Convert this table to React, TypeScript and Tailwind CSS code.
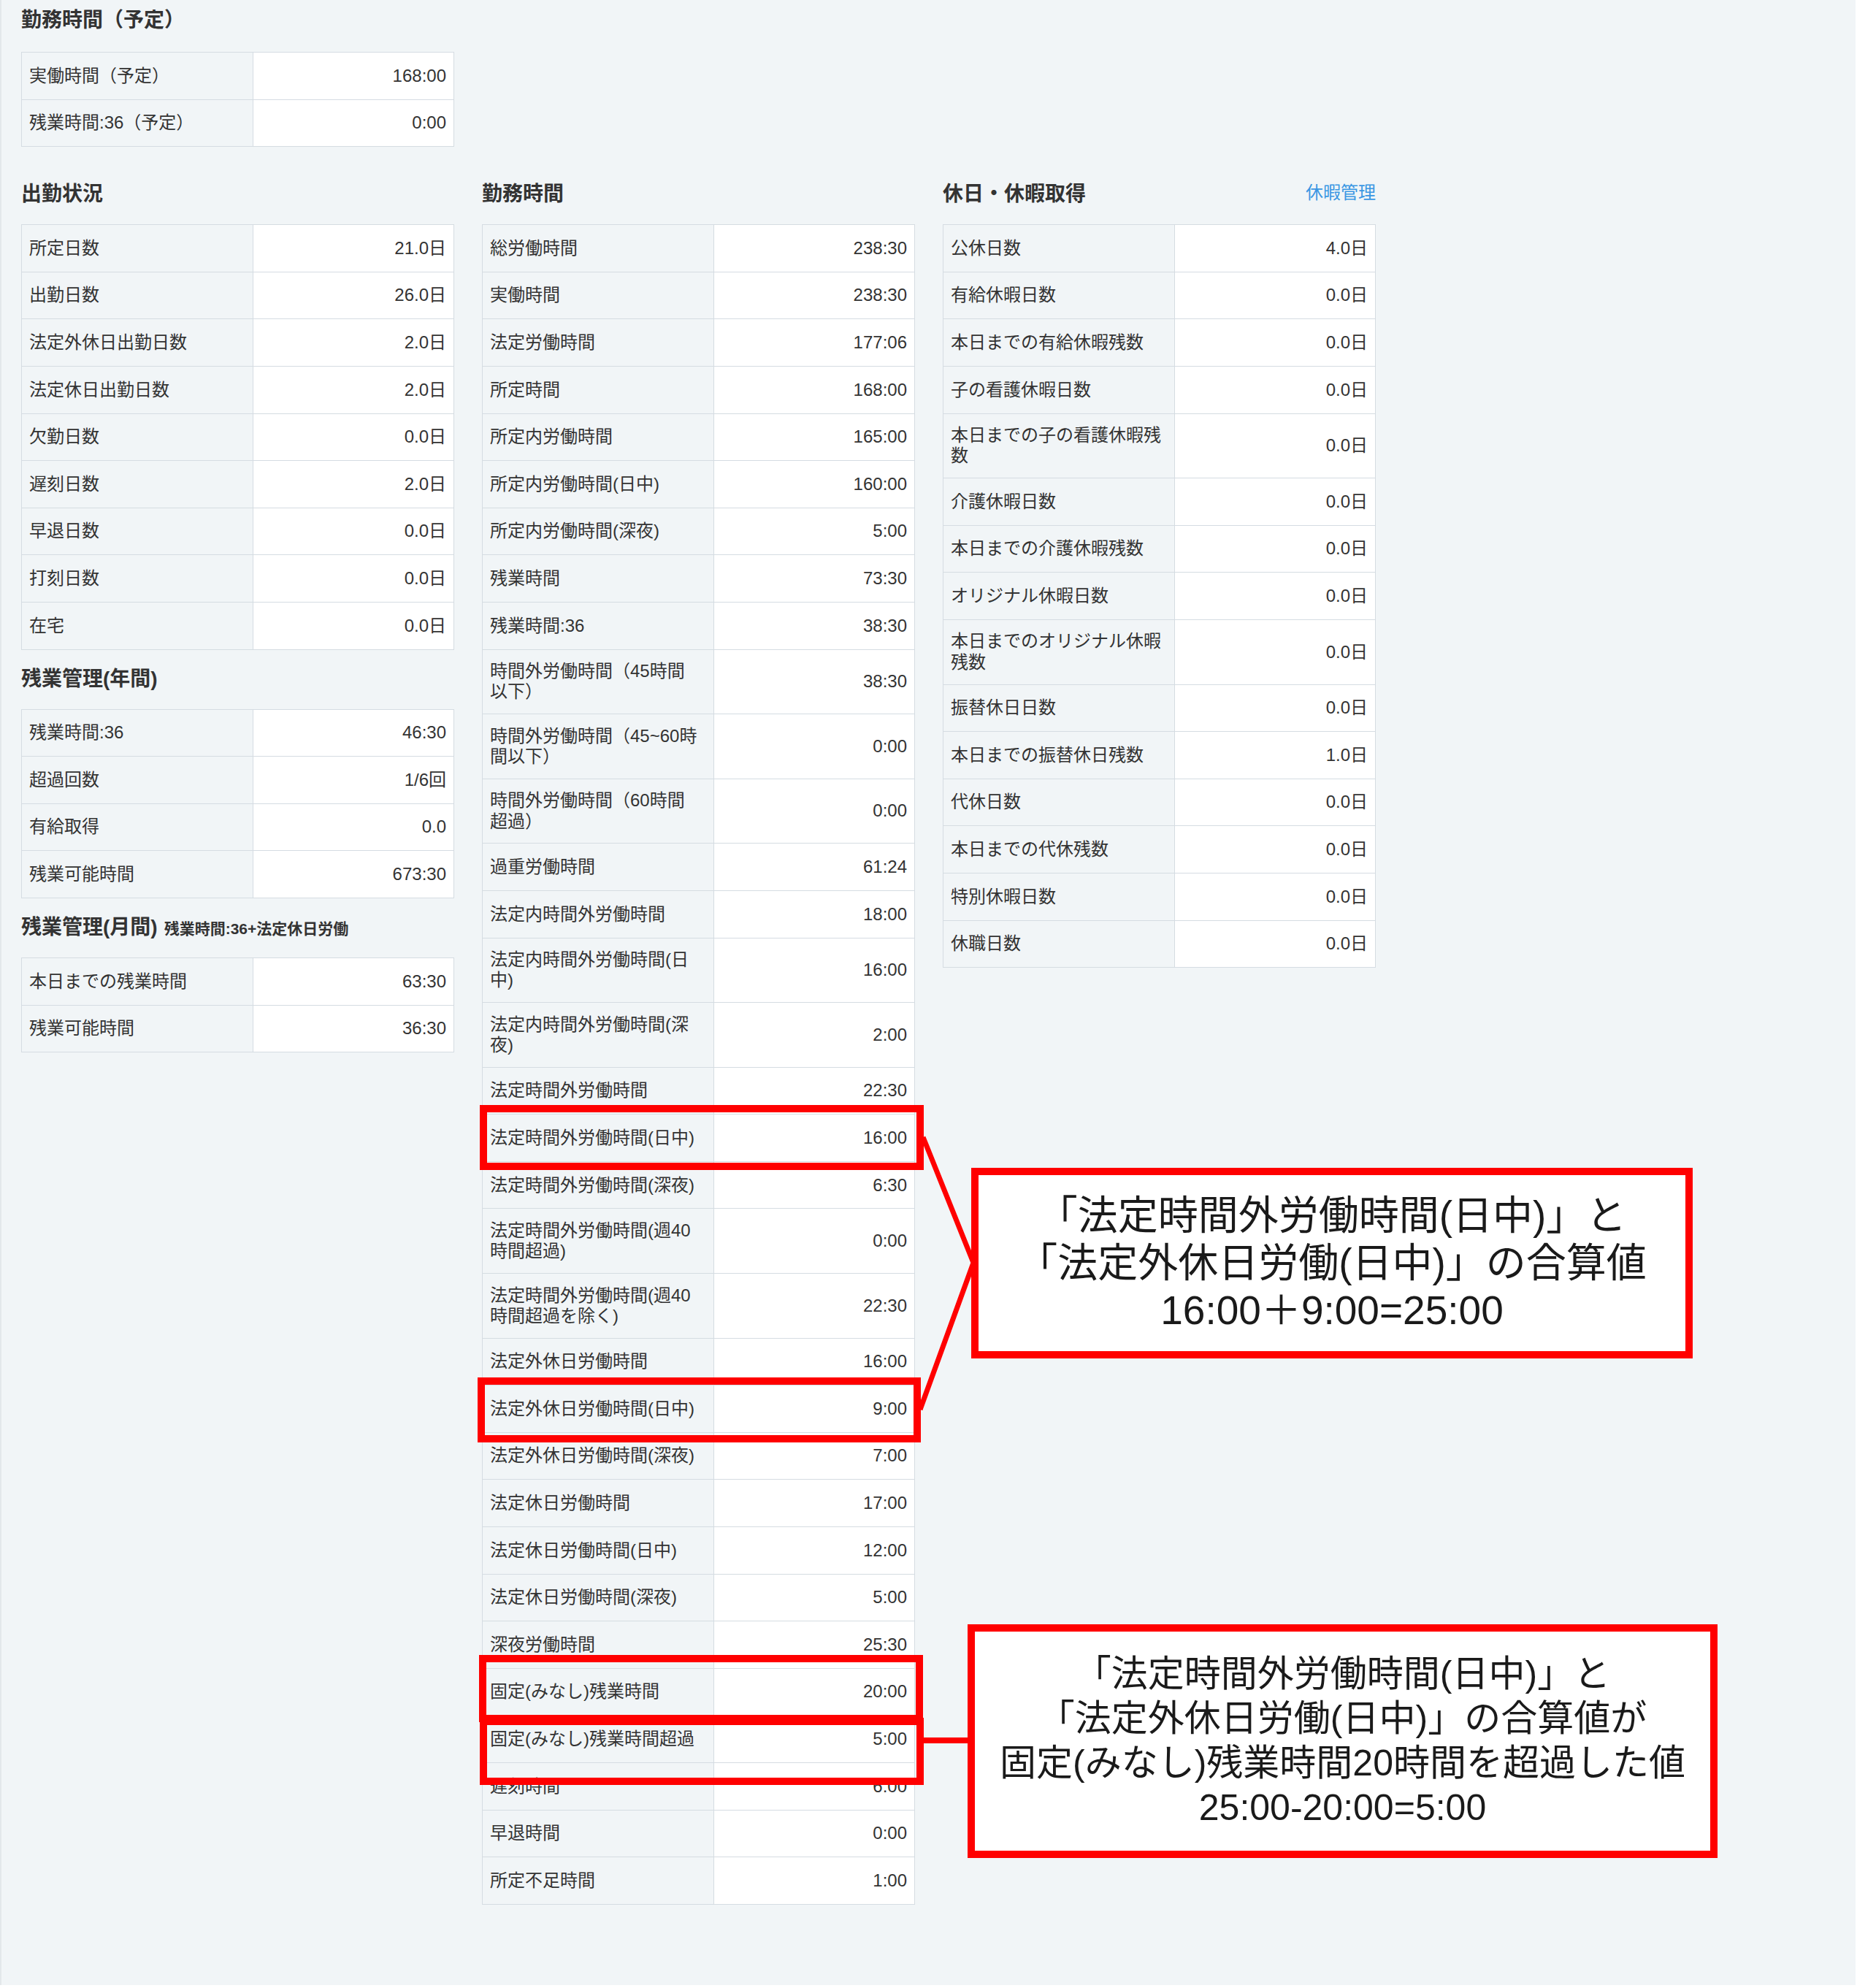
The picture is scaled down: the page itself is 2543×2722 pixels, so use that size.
import type { ReactNode } from "react"

// ---------------------------------------------------------------------------
// Data
// ---------------------------------------------------------------------------

type Row = [string, string]

const PLANNED: Row[] = [
  ["実働時間（予定）", "168:00"],
  ["残業時間:36（予定）", "0:00"],
]

const ATTENDANCE: Row[] = [
  ["所定日数", "21.0日"],
  ["出勤日数", "26.0日"],
  ["法定外休日出勤日数", "2.0日"],
  ["法定休日出勤日数", "2.0日"],
  ["欠勤日数", "0.0日"],
  ["遅刻日数", "2.0日"],
  ["早退日数", "0.0日"],
  ["打刻日数", "0.0日"],
  ["在宅", "0.0日"],
]

const OVERTIME_YEAR: Row[] = [
  ["残業時間:36", "46:30"],
  ["超過回数", "1/6回"],
  ["有給取得", "0.0"],
  ["残業可能時間", "673:30"],
]

const OVERTIME_MONTH: Row[] = [
  ["本日までの残業時間", "63:30"],
  ["残業可能時間", "36:30"],
]

const WORK_HOURS: Row[] = [
  ["総労働時間", "238:30"],
  ["実働時間", "238:30"],
  ["法定労働時間", "177:06"],
  ["所定時間", "168:00"],
  ["所定内労働時間", "165:00"],
  ["所定内労働時間(日中)", "160:00"],
  ["所定内労働時間(深夜)", "5:00"],
  ["残業時間", "73:30"],
  ["残業時間:36", "38:30"],
  ["時間外労働時間（45時間\n以下）", "38:30"],
  ["時間外労働時間（45~60時\n間以下）", "0:00"],
  ["時間外労働時間（60時間\n超過）", "0:00"],
  ["過重労働時間", "61:24"],
  ["法定内時間外労働時間", "18:00"],
  ["法定内時間外労働時間(日\n中)", "16:00"],
  ["法定内時間外労働時間(深\n夜)", "2:00"],
  ["法定時間外労働時間", "22:30"],
  ["法定時間外労働時間(日中)", "16:00"],
  ["法定時間外労働時間(深夜)", "6:30"],
  ["法定時間外労働時間(週40\n時間超過)", "0:00"],
  ["法定時間外労働時間(週40\n時間超過を除く)", "22:30"],
  ["法定外休日労働時間", "16:00"],
  ["法定外休日労働時間(日中)", "9:00"],
  ["法定外休日労働時間(深夜)", "7:00"],
  ["法定休日労働時間", "17:00"],
  ["法定休日労働時間(日中)", "12:00"],
  ["法定休日労働時間(深夜)", "5:00"],
  ["深夜労働時間", "25:30"],
  ["固定(みなし)残業時間", "20:00"],
  ["固定(みなし)残業時間超過", "5:00"],
  ["遅刻時間", "6:00"],
  ["早退時間", "0:00"],
  ["所定不足時間", "1:00"],
]

const HOLIDAYS: Row[] = [
  ["公休日数", "4.0日"],
  ["有給休暇日数", "0.0日"],
  ["本日までの有給休暇残数", "0.0日"],
  ["子の看護休暇日数", "0.0日"],
  ["本日までの子の看護休暇残\n数", "0.0日"],
  ["介護休暇日数", "0.0日"],
  ["本日までの介護休暇残数", "0.0日"],
  ["オリジナル休暇日数", "0.0日"],
  ["本日までのオリジナル休暇\n残数", "0.0日"],
  ["振替休日日数", "0.0日"],
  ["本日までの振替休日残数", "1.0日"],
  ["代休日数", "0.0日"],
  ["本日までの代休残数", "0.0日"],
  ["特別休暇日数", "0.0日"],
  ["休職日数", "0.0日"],
]

// ---------------------------------------------------------------------------
// Building blocks
// ---------------------------------------------------------------------------

function DataTable({ rows }: { rows: Row[] }) {
  return (
    <div className="border border-[#d5dce2] divide-y divide-[#d5dce2] text-[24px] leading-[28.3px] text-[#333333]">
      {rows.map(([label, value], i) => (
        <div key={i} className="grid grid-cols-[317px_1fr]">
          <div className="flex min-h-[63.6px] items-center whitespace-pre-line border-r border-[#d5dce2] bg-[#f1f5f7] py-[15.5px] pl-[10px] pr-[12px]">
            {label}
          </div>
          <div className="flex items-center justify-end bg-white pr-[10px]">{value}</div>
        </div>
      ))}
    </div>
  )
}

function Heading({ children, right }: { children: ReactNode; right?: ReactNode }) {
  return (
    <div className="flex items-center justify-between pt-[20px] pb-[21px]">
      <h3 className="flex items-baseline gap-[9px] text-[28px] leading-[40px] font-bold text-[#333333]">
        {children}
      </h3>
      {right}
    </div>
  )
}

// ---------------------------------------------------------------------------
// Red annotation layer
// ---------------------------------------------------------------------------

function Annotations() {
  return (
    <>
      {/* highlight frames */}
      <div className="absolute left-[655px] top-[1513px] h-[89px] w-[608px] border-[10px] border-[#ff0000]" />
      <div className="absolute left-[652px] top-[1886px] h-[89px] w-[607px] border-[10px] border-[#ff0000]" />
      <div className="absolute left-[654px] top-[2266px] h-[92px] w-[608px] border-[10px] border-[#ff0000]" />
      <div className="absolute left-[655px] top-[2352px] h-[92px] w-[608px] border-[10px] border-[#ff0000]" />

      {/* connectors */}
      <svg className="pointer-events-none absolute left-0 top-0" width="2541" height="2718">
        <polyline
          points="1262,1557 1331,1729 1258,1930"
          fill="none"
          stroke="#ff0000"
          strokeWidth="7"
          strokeLinejoin="miter"
        />
        <line x1="1262" y1="2383" x2="1326" y2="2383" stroke="#ff0000" strokeWidth="8" />
      </svg>

      {/* callouts */}
      <div className="absolute left-[1328px] top-[1599px] flex h-[261px] w-[988px] flex-col items-center justify-center border-[10px] border-[#ff0000] bg-white text-[55px] leading-[65px] text-[#1a1a1a]">
        <p>「法定時間外労働時間(日中)」と</p>
        <p>「法定外休日労働(日中)」の合算値</p>
        <p>16:00＋9:00=25:00</p>
      </div>
      <div className="absolute left-[1323px] top-[2224px] flex h-[320px] w-[1027px] flex-col items-center justify-center border-[10px] border-[#ff0000] bg-white text-[50px] leading-[61px] text-[#1a1a1a]">
        <p>「法定時間外労働時間(日中)」と</p>
        <p>「法定外休日労働(日中)」の合算値が</p>
        <p>固定(みなし)残業時間20時間を超過した値</p>
        <p>25:00-20:00=5:00</p>
      </div>
    </>
  )
}

// ---------------------------------------------------------------------------
// Page
// ---------------------------------------------------------------------------

export default function App() {
  return (
    <div className="relative h-[2718px] w-[2541px] border-l-2 border-[#e3e8eb] bg-[#f1f5f7] pl-[27px] font-['Liberation_Sans','Noto_Sans_CJK_JP',sans-serif]">
      {/* planned hours */}
      <section className="w-[593px]">
        <div className="pt-[8px] pb-[23px]">
          <h3 className="text-[28px] leading-[40px] font-bold text-[#333333]">勤務時間（予定）</h3>
        </div>
        <DataTable rows={PLANNED} />
      </section>

      <div className="mt-[25px] flex items-start gap-[38px]">
        <div className="w-[593px]">
          <Heading>出勤状況</Heading>
          <DataTable rows={ATTENDANCE} />
          <Heading>残業管理(年間)</Heading>
          <DataTable rows={OVERTIME_YEAR} />
          <Heading>
            残業管理(月間)
            <span className="text-[21px] leading-[28px]">残業時間:36+法定休日労働</span>
          </Heading>
          <DataTable rows={OVERTIME_MONTH} />
        </div>

        <div className="w-[593px]">
          <Heading>勤務時間</Heading>
          <DataTable rows={WORK_HOURS} />
        </div>

        <div className="w-[593px]">
          <Heading right={<a className="text-[24px] leading-[28px] text-[#3b97e3] -translate-y-[2px]">休暇管理</a>}>
            休日・休暇取得
          </Heading>
          <DataTable rows={HOLIDAYS} />
        </div>
      </div>

      <Annotations />
    </div>
  )
}
